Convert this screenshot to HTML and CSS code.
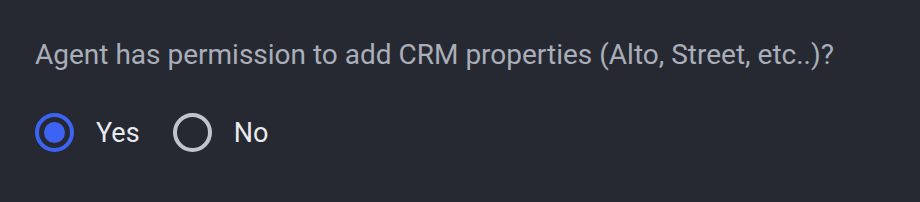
FILE: index.html
```html
<!DOCTYPE html>
<html>
	<head>
		<meta charset="utf-8">
		<title>CRM permission</title>
		<link rel="stylesheet" href="styles.css">
	</head>
	<body>
		<div class="field">
			<p class="question">Agent has permission to add CRM properties (Alto, Street, etc..)?</p>
			<div class="options">
				<label class="option">
					<input type="radio" name="crm" checked>
					<span class="dot"></span>
					<span class="text">Yes</span>
				</label>
				<label class="option">
					<input type="radio" name="crm">
					<span class="dot"></span>
					<span class="text">No</span>
				</label>
			</div>
		</div>
	</body>
</html>
```

FILE: styles.css
```css
* {
	margin: 0;
	padding: 0;
	box-sizing: border-box;
}

html,
body {
	width: 100%;
	height: 100%;
	background: #262932;
}

body {
	font-family: Roboto, "Liberation Sans", sans-serif;
}

.field {
	padding: 35px 0 0 35px;
}

.question {
	color: #a9aeb9;
	font-size: 28px;
	line-height: 40px;
}

.options {
	display: flex;
	align-items: center;
	margin-top: 38px;
}

.option {
	display: flex;
	align-items: center;
	margin-right: 33px;
	cursor: pointer;
}

.option input {
	display: none;
}

.option .dot {
	width: 39px;
	height: 39px;
	border-radius: 50%;
	border: 4px solid #c0c4cc;
	display: flex;
	justify-content: center;
	align-items: center;
}

.option input:checked + .dot {
	border-color: #3d63f5;
}

.option input:checked + .dot::after {
	content: '';
	width: 21px;
	height: 21px;
	border-radius: 50%;
	background: #3d63f5;
}

.option .text {
	color: #e8eaf0;
	font-size: 27px;
	margin-left: 22px;
}
```
